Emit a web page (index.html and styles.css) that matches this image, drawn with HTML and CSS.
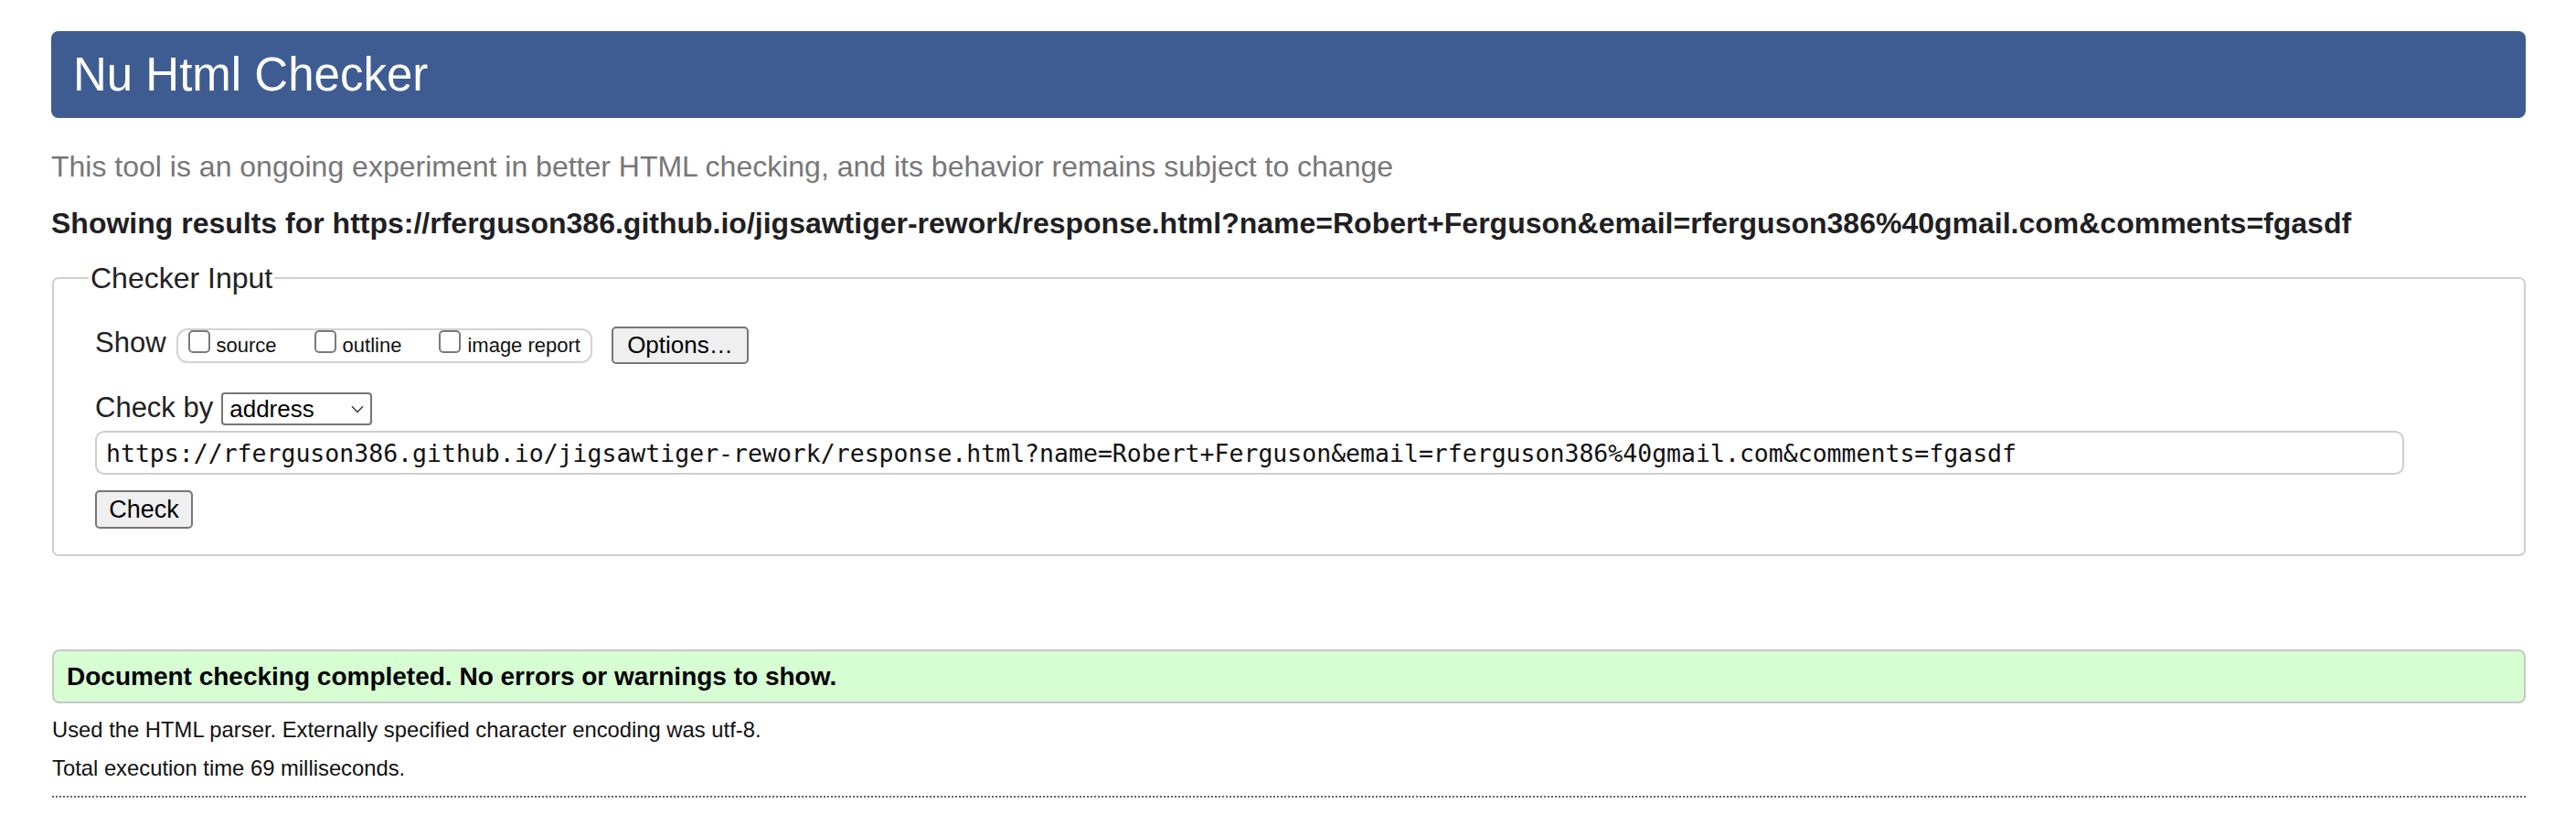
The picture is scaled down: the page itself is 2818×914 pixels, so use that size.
FILE: index.html
```html
<!DOCTYPE html>
<html lang="en">
<head>
<meta charset="utf-8">
<title>Nu Html Checker</title>
<link rel="stylesheet" href="styles.css">
</head>
<body>
<header class="masthead"><h1 class="masthead-title">Nu Html Checker</h1></header>
<p class="intro">This tool is an ongoing experiment in better HTML checking, and its behavior remains subject to change</p>
<h2 class="results-for">Showing results for https://rferguson386.github.io/jigsawtiger-rework/response.html?name=Robert+Ferguson&amp;email=rferguson386%40gmail.com&amp;comments=fgasdf</h2>
<form class="checker-form">
  <fieldset class="checker-input">
    <legend class="checker-legend">Checker Input</legend>
    <div class="show-row">
      <span class="field-label show-label">Show</span>
      <span class="show-group">
        <label class="show-option"><input type="checkbox" class="box">source</label>
        <label class="show-option"><input type="checkbox" class="box">outline</label>
        <label class="show-option"><input type="checkbox" class="box">image report</label>
      </span>
      <button type="button" class="btn options-btn">Options…</button>
    </div>
    <div class="checkby-row">
      <label class="field-label checkby-label" for="docselect">Check by</label>
      <span class="select-wrap">
        <select id="docselect" class="doc-select"><option>address</option></select>
        <svg class="chevron" width="14" height="9" viewBox="0 0 14 9" aria-hidden="true"><path d="M1 1.2 L7 7.6 L13 1.2" fill="none" stroke="#333" stroke-width="1.4"/></svg>
      </span>
    </div>
    <input class="doc-url" type="url" value="https://rferguson386.github.io/jigsawtiger-rework/response.html?name=Robert+Ferguson&amp;email=rferguson386%40gmail.com&amp;comments=fgasdf">
    <button type="submit" class="btn check-btn">Check</button>
  </fieldset>
</form>
<div class="success"><p class="success-text">Document checking completed. No errors or warnings to show.</p></div>
<p class="details">Used the HTML parser. Externally specified character encoding was utf-8.</p>
<p class="details">Total execution time 69 milliseconds.</p>
<hr class="dotted">
</body>
</html>
```
FILE: styles.css
```css
html, body {
  margin: 0;
  background: #fff;
}
body {
  padding: 34px 55px 0 56px;
  font-family: "Liberation Sans", Arial, Helvetica, sans-serif;
  color: #222;
}
.masthead {
  background: #3e5c92;
  border-radius: 8px;
  height: 95px;
  padding-left: 24px;
}
.masthead-title {
  margin: 0;
  font-size: 51px;
  font-weight: normal;
  line-height: 95px;
  color: #fff;
}
.intro {
  margin: 34px 0 0;
  font-size: 32px;
  line-height: 38px;
  color: #777;
  white-space: nowrap;
}
.results-for {
  margin: 25px 0 0;
  font-size: 32px;
  line-height: 36px;
  font-weight: bold;
  color: #1f1f24;
  white-space: nowrap;
}
.checker-form {
  margin: 24px 0 0;
}
.checker-input {
  margin: 0 0 0 1px;
  padding: 35px 45px 28px;
  border: 2px solid #cfcfcf;
  border-radius: 7px;
  min-inline-size: 0;
}
.checker-legend {
  padding: 0 2px;
  margin-left: -7px;
  font-size: 32px;
  line-height: 36px;
  color: #222;
}
.show-row {
  display: flex;
  align-items: flex-start;
  height: 41px;
}
.field-label {
  font-size: 31px;
  line-height: 36px;
  color: #222;
}
.show-label {
  margin-right: 11px;
}
.show-group {
  display: flex;
  align-items: center;
  gap: 41px;
  box-sizing: border-box;
  height: 38px;
  margin-top: 2px;
  padding: 0 11px;
  border: 2px solid #d3d3d3;
  border-radius: 12px;
}
.show-option {
  display: flex;
  align-items: center;
  gap: 7px;
  font-size: 22px;
  line-height: 26px;
  color: #111;
}
.box {
  appearance: none;
  -webkit-appearance: none;
  box-sizing: border-box;
  width: 24px;
  height: 25px;
  margin: 0 0 10px;
  border: 2px solid #7a7a7a;
  border-radius: 5px;
  background: #fff;
}
.btn {
  box-sizing: border-box;
  font-family: "Liberation Sans", Arial, Helvetica, sans-serif;
  background: #efefef;
  border: 2px solid #767676;
  border-radius: 5px;
  color: #000;
  padding: 0;
}
.options-btn {
  margin-left: 21px;
  width: 150px;
  height: 41px;
  font-size: 26px;
}
.checkby-row {
  display: flex;
  align-items: baseline;
  margin-top: 30px;
}
.checkby-label {
  margin-right: 9px;
}
.select-wrap {
  position: relative;
  display: inline-block;
}
.doc-select {
  appearance: none;
  -webkit-appearance: none;
  box-sizing: border-box;
  width: 165px;
  height: 36px;
  padding: 0 0 0 7px;
  border: 2px solid #767676;
  border-radius: 4px;
  background: #fff;
  font-family: "Liberation Sans", Arial, Helvetica, sans-serif;
  font-size: 26px;
  color: #000;
}
.chevron {
  position: absolute;
  right: 9px;
  top: 14px;
  pointer-events: none;
}
.doc-url {
  display: block;
  box-sizing: border-box;
  width: 2526px;
  height: 48px;
  margin-top: 6px;
  padding: 0 10px;
  border: 2px solid #cdcdcd;
  border-radius: 10px;
  font-family: "DejaVu Sans Mono", "Liberation Mono", monospace;
  font-size: 26.5px;
  color: #111;
  background: #fff;
}
.check-btn {
  display: block;
  margin-top: 17px;
  width: 107px;
  height: 42px;
  font-size: 27px;
}
.success {
  margin: 102px 0 0 1px;
  height: 59px;
  box-sizing: border-box;
  border: 2px solid #c8c8c8;
  border-radius: 8px;
  background: #d7fdd3;
  padding-left: 14px;
}
.success-text {
  margin: 0;
  font-size: 28px;
  line-height: 55px;
  font-weight: bold;
  color: #000;
}
.details {
  margin: 15px 0 0 1px;
  font-size: 23.8px;
  line-height: 28px;
  color: #111;
}
.details + .details {
  margin-top: 14px;
}
.dotted {
  margin: 16px 0 0 1px;
  height: 0;
  border: 0;
  border-top: 2px dotted #666;
}
```
